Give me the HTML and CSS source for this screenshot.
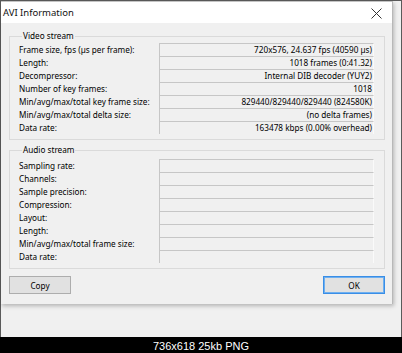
FILE: index.html
```html
<!DOCTYPE html>
<html lang="en">
<head>
    <meta charset="UTF-8">
    <title>AVI Information</title>
    <link rel="stylesheet" href="styles.css">
</head>
<body>
    <div class="shot">
        <div class="desk">
            <div class="dialog">
                <div class="titlebar">
                    <span class="title">AVI Information</span>
                    <svg class="close" width="11" height="11" viewBox="0 0 11 11">
                        <path d="M0.5 0.5 L10.5 10.5 M10.5 0.5 L0.5 10.5" stroke="#333" stroke-width="1" fill="none"/>
                    </svg>
                </div>
                <div class="body">
                    <fieldset class="group">
                        <legend>Video stream</legend>
                        <div class="rows">
                            <span class="label">Frame size, fps (µs per frame):</span><span class="value">720x576, 24.637 fps (40590 µs)</span>
                            <span class="label">Length:</span><span class="value">1018 frames (0:41.32)</span>
                            <span class="label">Decompressor:</span><span class="value">Internal DIB decoder (YUY2)</span>
                            <span class="label">Number of key frames:</span><span class="value">1018</span>
                            <span class="label">Min/avg/max/total key frame size:</span><span class="value">829440/829440/829440 (824580K)</span>
                            <span class="label">Min/avg/max/total delta size:</span><span class="value">(no delta frames)</span>
                            <span class="label">Data rate:</span><span class="value">163478 kbps (0.00% overhead)</span>
                        </div>
                    </fieldset>
                    <fieldset class="group audio">
                        <legend>Audio stream</legend>
                        <div class="rows">
                            <span class="label">Sampling rate:</span><span class="value"></span>
                            <span class="label">Channels:</span><span class="value"></span>
                            <span class="label">Sample precision:</span><span class="value"></span>
                            <span class="label">Compression:</span><span class="value"></span>
                            <span class="label">Layout:</span><span class="value"></span>
                            <span class="label">Length:</span><span class="value"></span>
                            <span class="label">Min/avg/max/total frame size:</span><span class="value"></span>
                            <span class="label">Data rate:</span><span class="value"></span>
                        </div>
                    </fieldset>
                    <div class="buttons">
                        <button>Copy</button>
                        <button class="default">OK</button>
                    </div>
                </div>
            </div>
        </div>
        <div class="caption">736x618 25kb PNG</div>
    </div>
</body>
</html>
```

FILE: styles.css
```css
body {
    margin: 0;
    font-family: "Noto Sans", sans-serif;
    font-size: 8.2px;
    color: #000;
    background: #000;
}
.shot {
    width: 402px;
    height: 353px;
    display: flex;
    flex-direction: column;
}
.desk {
    height: 336px;
    background: #f0f0f0;
    border: 1px solid #5a5a5a;
    border-bottom: none;
}
.dialog {
    width: 391px;
    background: #f0f0f0;
    border-top: 1px solid #c4c4c4;
    border-right: 1px solid #b8b8b8;
    box-shadow: 1px 2px 4px rgba(0, 0, 0, 0.25);
}
.titlebar {
    height: 21px;
    background: #fff;
    display: flex;
    align-items: center;
    justify-content: space-between;
    padding: 0 10px 0 2px;
}
.title {
    font-size: 9.5px;
    color: #111;
}
.close {
    margin-top: 1px;
}
.body {
    padding: 7px 7px 10px 8px;
}
.group {
    margin: 0;
    padding: 1px 10px 5px 9px;
    border: 1px solid #dadada;
}
.group legend {
    padding: 0 1px;
    margin-left: 3px;
    line-height: 12px;
}
.group.audio {
    margin-top: 4px;
    padding-top: 3px;
}
.rows {
    display: grid;
    grid-template-columns: 1fr 215px;
    grid-auto-rows: 13px;
}
.label {
    line-height: 13px;
    white-space: nowrap;
}
.value {
    text-align: right;
    line-height: 12px;
    padding-right: 1px;
    border-top: 1px solid #c6c6c6;
    border-left: 1px solid #c6c6c6;
    border-right: 1px solid #fafafa;
    white-space: nowrap;
}
.buttons {
    display: flex;
    justify-content: space-between;
    margin-top: 7px;
}
button {
    width: 62px;
    height: 18px;
    font-family: "Noto Sans", sans-serif;
    font-size: 8.2px;
    color: #000;
    background: #e1e1e1;
    border: 1px solid #adadad;
    padding: 0;
}
button.default {
    border-color: #3a8ee6;
    box-shadow: inset 0 0 0 1px #6fb0f0;
}
.caption {
    flex: 1;
    color: #fff;
    font-family: "Liberation Sans", Arial, sans-serif;
    font-size: 11px;
    text-align: center;
    line-height: 14px;
    padding-top: 2px;
}
```
